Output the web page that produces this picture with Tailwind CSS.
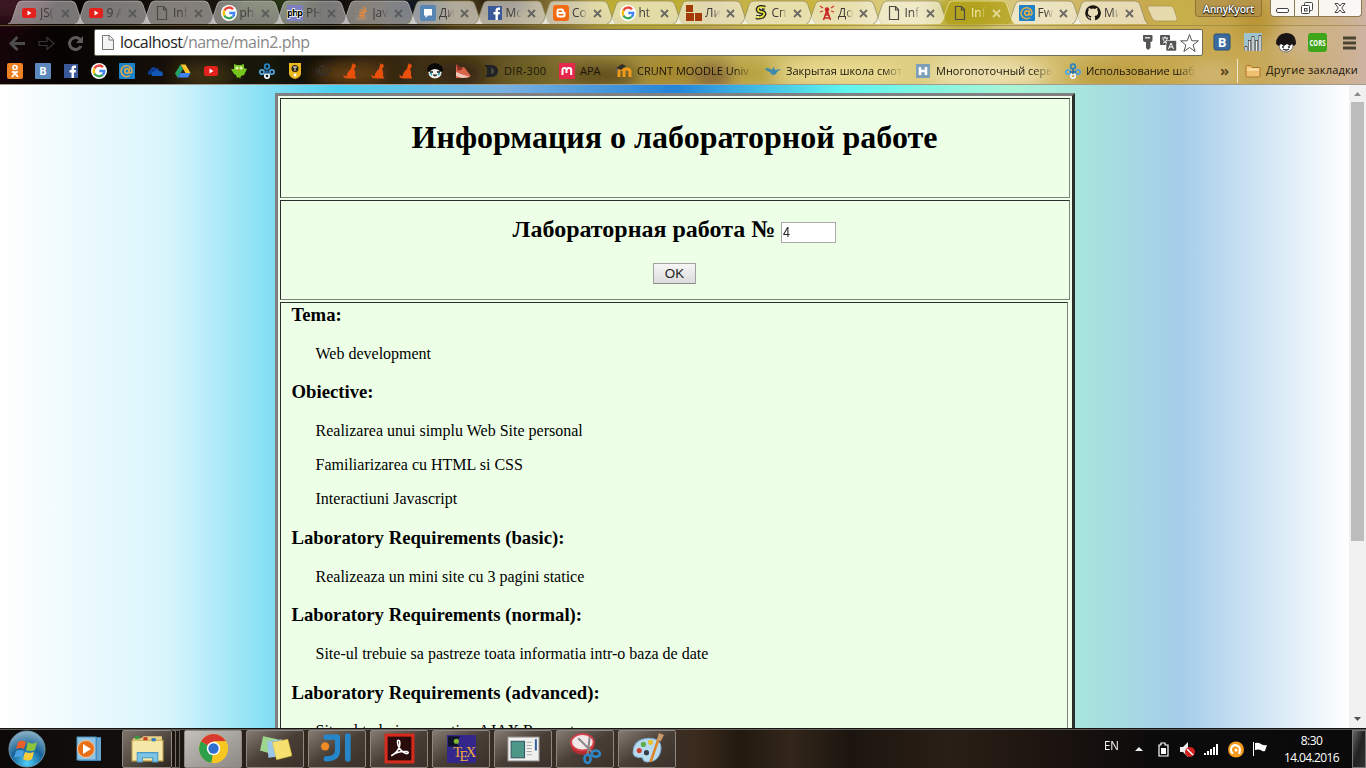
<!DOCTYPE html>
<html lang="ru">
<head>
<meta charset="utf-8">
<title>Информация о лабораторной работе</title>
<script src="https://cdn.jsdelivr.net/npm/@tailwindcss/browser@4"></script>
</head>
<body class="w-[1366px] h-[768px] overflow-hidden flex flex-col font-['Open_Sans','Noto_Sans',sans-serif] text-black">

<!-- Browser chrome -->
<header class="relative h-[85px] shrink-0 flex flex-col border-b border-[#a39a90] overflow-hidden bg-[linear-gradient(90deg,#160508_0px,#060302_60px,#0c0a05_120px,#1b120b_180px,#16170a_270px,#0a0908_330px,#2d200f_380px,#4a3a18_450px,#6b5a28_520px,#94803a_580px,#a9943f_650px,#bda850_720px,#cfbe68_790px,#dccd80_900px,#ddcf8c_980px,#d0ba68_1060px,#c7a951_1130px,#c6a74e_1240px,#caae76_1310px,#ceb3a2_1366px)]">
  <svg class="absolute inset-0" width="1366" height="85">
    <defs><filter id="soft" x="-50%" y="-50%" width="200%" height="200%"><feGaussianBlur stdDeviation="9"/></filter></defs>
    <g filter="url(#soft)">
      <ellipse cx="10" cy="0" rx="40" ry="22" fill="#3a1822"/><ellipse cx="270" cy="2" rx="40" ry="12" fill="#2c3a12"/>
      <ellipse cx="205" cy="75" rx="30" ry="10" fill="#4a3a18"/><ellipse cx="350" cy="74" rx="38" ry="12" fill="#6b4512"/>
      <ellipse cx="410" cy="10" rx="30" ry="20" fill="#111420"/><ellipse cx="500" cy="0" rx="30" ry="16" fill="#2a1d0c"/>
      <ellipse cx="460" cy="74" rx="25" ry="12" fill="#302010"/><ellipse cx="530" cy="74" rx="25" ry="12" fill="#6a6020"/>
      <ellipse cx="600" cy="76" rx="40" ry="12" fill="#5b4a1e"/><ellipse cx="670" cy="72" rx="25" ry="12" fill="#a3842a"/>
      <ellipse cx="712" cy="76" rx="22" ry="12" fill="#806030"/><ellipse cx="755" cy="74" rx="18" ry="9" fill="#b09a30"/>
      <ellipse cx="840" cy="72" rx="60" ry="12" fill="#ecdd96"/><ellipse cx="990" cy="74" rx="60" ry="12" fill="#f0e2b4"/>
      <ellipse cx="640" cy="8" rx="60" ry="20" fill="#c0b030"/><ellipse cx="800" cy="8" rx="70" ry="18" fill="#c8b43a"/>
      <ellipse cx="965" cy="12" rx="36" ry="18" fill="#aea01c"/><ellipse cx="1110" cy="76" rx="40" ry="10" fill="#b99a3c"/>
      <ellipse cx="1175" cy="14" rx="22" ry="22" fill="#c8b04a"/><ellipse cx="1255" cy="20" rx="20" ry="20" fill="#ba9534"/>
      <ellipse cx="1215" cy="74" rx="30" ry="10" fill="#d2b878"/><ellipse cx="1310" cy="40" rx="30" ry="14" fill="#cdb488"/>
    </g>
  </svg>

  <div class="relative h-[25px] shrink-0 flex">
    <div id="tabs" class="flex pl-[8px] w-[1144px]"></div>
    <svg width="34" height="25" class="shrink-0"><path d="M5 6H26q3 0 4 3l3 9q1 3-2 3H12q-3 0-4-3L4 9q-1-3 1-3z" fill="#fff" fill-opacity=".55" stroke="#a8904a" stroke-opacity=".7"/></svg>
    <div class="ml-[17px] w-[67px] h-[17px] rounded-b border border-t-0 border-[#8d7434] bg-[#b0904a]/70 text-center text-white text-[10.5px] leading-[18px] font-semibold tracking-[-0.25px] [text-shadow:0_0_2px_#000,0_1px_1px_#000]">AnnyKyort</div>
    <div class="ml-[8px] w-[92px] h-[17px] flex rounded-b border border-t-0 border-[#8d7a50] bg-white/90">
      <svg width="24" height="16" class="border-r border-[#8d7a50]"><rect x="5.500" y="8.500" width="12" height="4" rx="1.500" fill="#fff" stroke="#444"/></svg>
      <svg width="25" height="16" class="border-r border-[#8d7a50]"><g fill="#fff" stroke="#444"><rect x="9.500" y="2.500" width="8" height="8" rx="1"/><rect x="6.500" y="5.500" width="8" height="8" rx="1"/><rect x="9.500" y="8.500" width="2.500" height="2.500"/></g></svg>
      <svg width="42" height="16"><path d="M16 3.500h3l2 2.500 2-2.500h3l-3.300 4.500 3.300 4.500h-3l-2-2.500-2 2.500h-3l3.300-4.500z" fill="#fff" stroke="#444"/></svg>
    </div>
  </div>

  <div class="relative h-[33px] shrink-0 flex items-center border-t border-[#8d8040]/60">
    <svg width="94" height="33" class="shrink-0" fill="none">
      <path d="M25 17.500H12M17.500 11l-6.500 6.500 6.500 6.500" stroke="#4c4c4c" stroke-width="3"/>
      <path d="M39 15.500h8v-4l7 6-7 6v-4h-8z" stroke="#363636" stroke-width="1.200"/>
      <path d="M80 13.500A6 6 0 1 0 81 20" stroke="#5c5c5c" stroke-width="3"/><path d="M83 10v7h-7z" fill="#5c5c5c"/>
    </svg>
    <div class="w-[1109px] h-[27px] shrink-0 bg-white rounded-[2px] border border-[#6f6a5a] flex items-center">
      <svg width="25" height="25" class="shrink-0" fill="#f4f4f4" stroke="#777"><path d="M7.500 5.500h7l4 4v10h-11zM14 5.500v4.500h4.500"/></svg>
      <div class="text-[16px] leading-[24px] text-[#888] w-[1020px] whitespace-nowrap tracking-[-0.5px]"><span class="text-[#222]">localhost</span>/name/main2.php</div>
      <svg width="62" height="25" class="shrink-0">
        <path d="M3.500 5h8q1 0 1 1v4q0 2-2 2v6L8 20l-2-2v-6q-3 0-3-2V6q0-1 .5-1z" fill="#555"/><rect x="5" y="7" width="5" height="1.500" fill="#ddd"/>
        <rect x="20" y="5" width="10" height="10" rx="1" fill="#555"/><rect x="26" y="10.500" width="10.500" height="10.500" rx="1" fill="#555" stroke="#fff" stroke-width=".6"/>
        <path d="M22 8h6M25 6.500V8M23 13c3-1 4-3 4-5M23 9c1 2 2 3 4 4" stroke="#fff" fill="none"/><path d="M28.500 19l2.500-6 2.500 6M29.500 17h3" stroke="#fff" fill="none"/>
        <path d="M49.500 4.500l2.300 6.300h6.600l-5.300 4.200 2 6.500-5.600-4-5.600 4 2-6.500-5.300-4.200h6.600z" fill="#fff" stroke="#555"/>
      </svg>
    </div>
    <svg width="163" height="33" class="shrink-0">
      <rect x="11" y="8" width="16" height="16" rx="2" fill="#3a6a9e" stroke="#24507c"/><text x="19" y="21" text-anchor="middle" font-size="13" font-weight="700" fill="#fff" font-family="Open Sans">B</text>
      <rect x="41" y="7" width="18" height="18" fill="#9fc2cf"/><path d="M43 25v-5M46.500 25V14M50 25V10M53.500 25V14M57 25V9" stroke="#555" stroke-width="3"/><path d="M43 25v-4M46.500 25V15M50 25V11M53.500 25V15M57 25V10" stroke="#eee" stroke-width="1.500"/>
      <ellipse cx="83" cy="20" rx="7" ry="6" fill="#fff" stroke="#777"/><path d="M73 18q0-10 10-11 10 0 10 11l-2 2-2-2-2 2-3-2-3 2-3-2-2 2z" fill="#1b1414"/><path d="M79 21h2M85 21h2M80 23q3 2 6 0" stroke="#222" stroke-width="1.300" fill="none"/>
      <rect x="105" y="7" width="19" height="19" rx="3" fill="#3fa51a"/><text x="114.500" y="20" text-anchor="middle" font-size="9" font-weight="700" fill="#fff" font-family="Open Sans" textLength="16" lengthAdjust="spacingAndGlyphs">CORS</text>
      <path d="M140 12h13M140 17h13M140 22h13" stroke="#4c4433" stroke-width="3"/>
    </svg>
  </div>
  <div id="marks" class="relative h-[25px] flex items-center pl-[1px] text-[11px] text-[#1c1508]"></div>
</header>

<!-- Web page -->
<main class="h-[643px] shrink-0 flex overflow-hidden">
  <div class="w-[1349px] h-full pt-[8px] flex justify-center items-start bg-[linear-gradient(90deg,#fff,#d8f5fc,#4bd0ef,#78b0e0,#2484d8,#5ef5ee,#aaf5d5,#a5cde9,#fff)]">
    <div class="w-[800px] flex flex-col gap-[2px] border-[3px] border-t-[#808080] border-l-[#808080] border-r-[#2b2f2b] border-b-[#2b2f2b] p-[2px] bg-[#eeffe8] font-['Liberation_Serif',serif]">
      <section class="h-[100px] border border-t-[#2b2f2b] border-l-[#2b2f2b] border-r-[#808080] border-b-[#808080] pt-[20px] text-center">
        <h1 class="text-[32px] leading-[37px] font-bold">Информация о лабораторной работе</h1>
      </section>
      <section class="h-[100px] border border-t-[#2b2f2b] border-l-[#2b2f2b] border-r-[#808080] border-b-[#808080] pt-[14px] flex flex-col items-center">
        <div class="flex"><h2 class="text-[24px] leading-[28px] font-bold whitespace-nowrap">Лабораторная работа №</h2>
          <div class="ml-[6px] mt-[7px] w-[55px] h-[21px] bg-white border border-[#a9a9a9] pl-[1px] text-[14px] leading-[19px] font-['Liberation_Sans',sans-serif] text-[#222]"><span class="inline-block origin-left scale-x-90">4</span></div></div>
        <button class="mt-[20px] w-[43px] h-[21px] rounded-[1px] border border-[#a0a0a0] border-b-[#8a8a8a] bg-linear-to-b from-[#f6f6f6] to-[#dcdcdc] text-[13.33px] leading-[19px] font-['Liberation_Sans',sans-serif] text-[#222]">OK</button>
      </section>
      <section class="w-[788px] h-[600px] border border-t-[#2b2f2b] border-l-[#2b2f2b] border-r-[#808080] border-b-[#808080] pl-[11px] pt-[1px] text-[16px] leading-[18px] [&_h3]:text-[18.72px] [&_h3]:leading-[22px] [&_h3]:font-bold [&_h3]:mb-[18.72px] [&_p]:pl-[24px] [&_p]:mb-[16px] [&_p+h3]:mt-[18.72px] [&_p:has(+h3)]:mb-0">
        <h3>Tema:</h3><p>Web development</p>
        <h3>Obiective:</h3><p>Realizarea unui simplu Web Site personal</p><p>Familiarizarea cu HTML si CSS</p><p>Interactiuni Javascript</p>
        <h3>Laboratory Requirements (basic):</h3><p>Realizeaza un mini site cu 3 pagini statice</p>
        <h3>Laboratory Requirements (normal):</h3><p>Site-ul trebuie sa pastreze toata informatia intr-o baza de date</p>
        <h3>Laboratory Requirements (advanced):</h3><p>Site-ul trebuie sa contina AJAX Requests</p>
      </section>
    </div>
  </div>
  <div class="w-[17px] h-full bg-[#f1f1f1] flex flex-col items-center">
    <svg width="17" height="17"><path d="M5 11h7l-3.500-4z" fill="#8b8b8b"/></svg>
    <div class="w-[13px] h-[439px] bg-[#bcbcbc]"></div>
    <svg width="17" height="17" class="mt-auto"><path d="M5 6h7l-3.500 4z" fill="#505050"/></svg>
  </div>
</main>

<!-- Taskbar -->
<footer class="h-[40px] shrink-0 flex border-t border-[#181410] bg-[linear-gradient(90deg,#0c0a09,#120e0b_120px,#33271e_300px,#3c3028_660px,#3a2a1c_700px,#22190f_740px,#33261a_790px,#1c150f_850px,#2a1f16_950px,#1e1510_1040px,#0c0b0b_1150px,#0a0a0a)]">
  <div id="task" class="flex w-[1098px] border-t border-[#777]/70"></div>
  <div class="flex-1 flex items-center border-t border-[#777]/70 text-white">
    <span class="w-[37px] pl-[6px] text-[12px] leading-[16px] -mt-[6px]"><span class="inline-block origin-left scale-x-95">EN</span></span>
    <svg width="140" height="38" class="shrink-0">
      <path d="M0 21h8l-4-4z" fill="#eee"/>
      <path d="M26 13h4v2h3v11h-9V15h2z" fill="none" stroke="#fff" stroke-width="1.200"/><rect x="26" y="18" width="5" height="6" fill="#fff"/>
      <path d="M45 17h3l5-5v15l-5-5h-3z" fill="#eee"/><circle cx="55" cy="22" r="5" fill="#d02020"/><path d="M52 19l6 6" stroke="#fff" stroke-width="1.500"/>
      <path d="M70 25v-2M73 25v-4M76 25v-6M79 25v-8M82 25V14" stroke="#fff" stroke-width="2"/>
      <circle cx="101" cy="19.500" r="8" fill="#f39a1b"/><path d="M98 23.500a4.500 4.500 0 1 1 6.500-2v2.500" fill="none" stroke="#fff" stroke-width="2.200"/><circle cx="101" cy="20" r="1.500" fill="#fff"/>
      <path d="M118.500 12v14" stroke="#fff"/><path d="M120 13q3-1 6 1 3 2 6 1l-2 6q-3 1-4-1-3-1-6 0z" fill="#fff"/>
    </svg>
    <div class="w-[77px] text-center text-[12px] leading-[17px] -ml-[2px] tracking-[-0.6px]"><div>8:30</div><div>14.04.2016</div></div>
    <div class="ml-auto w-[14px] h-[38px] border border-[#777] bg-linear-to-br from-[#666] via-[#222] to-[#333]"></div>
  </div>
</footer>

<script>
// 16x16 glyphs shared by the tabs and the bookmarks bar
const T = (t, s, f, y = 13) => `<text x="8" y="${y}" text-anchor="middle" font-family="Open Sans" font-weight="700" font-size="${s}" fill="${f}">${t}</text>`;
const cat = '<path d="M9.500 0l1.200 1.800L12 .5l.8 3-1.800 2.500Q13 9 12 13l1.500 2.500H5.500L2 15Q0 14 .5 11q1 2.500 3 2.500Q4 9 8 6l.5-2z" fill="#e8500c"/>';
const ring = '<g fill="none" stroke-width="1.800"><circle cx="8" cy="3.500" r="2.300" stroke="#2b85c2"/><circle cx="3" cy="9" r="2.200" stroke="#55a9dd"/><circle cx="13" cy="9" r="2.200" stroke="#4ba0dc"/><circle cx="8" cy="13" r="2.200" stroke="#e8f4fa"/></g><path d="M8 6v5M5 9h6" stroke="#2368a0" stroke-width="1.500"/>';
const I = {
  yt: '<rect x="1" y="3" width="14" height="10" rx="2.500" fill="#e3201b"/><path d="M6.500 5.500v5l4-2.500z" fill="#fff"/>',
  doc: '<path d="M3.500 1.500h6l3 3v10h-9zM9.500 1.500v3.500h3" fill="none" stroke="#4d4a45" stroke-width="1.200"/>',
  g: '<circle cx="8" cy="8" r="8" fill="#fff"/><g fill="none" stroke-width="2.300"><path d="M12 4.200A5.300 5.300 0 0 0 3.400 5.400" stroke="#ea4335"/><path d="M3.400 5.400a5.300 5.300 0 0 0 0 5.200" stroke="#fbbc05"/><path d="M3.400 10.600a5.300 5.300 0 0 0 8.200 1.300" stroke="#34a853"/><path d="M11.600 11.900A5.300 5.300 0 0 0 13.300 8H8.300" stroke="#4285f4"/></g>',
  php: '<rect width="16" height="16" fill="#7c7fc0"/><text x="8" y="11" text-anchor="middle" font-size="9.500" font-weight="700" textLength="16" stroke="#fff" stroke-width="1.500" paint-order="stroke" font-family="Open Sans">php</text>',
  so: '<path d="M3 10v4.500h9V10" fill="none" stroke="#a08c7c" stroke-width="1.300"/><path d="M5 12.500h5.500M5 10l5.500.8M5.500 7l5 2M7 4l4.200 4M10 1.500l2 5.500" stroke="#ea8a3c" stroke-width="1.500"/>',
  chat: '<rect width="16" height="16" rx="2" fill="#5785b4"/><path d="M4 4h8v6.500H8L5.500 13v-2.500H4z" fill="#fff"/>',
  fb: '<rect x="1" y="1" width="14" height="14" fill="#3b5998"/><path d="M8.500 15V9.500H6.500V7h2V5.500q0-3 3-3H13V5h-1.300q-.8 0-.8.900V7H13l-.4 2.500h-1.700V15z" fill="#fff"/>',
  bl: '<rect width="16" height="16" rx="3" fill="#f26a13"/><path d="M5.500 3.500h3q2.500 0 2.500 2.500 0 1 1.500 1v3q0 2.500-2.500 2.500H6q-2.500 0-2.500-2.500V6q0-2.500 2-2.500z" fill="#fff"/><path d="M6 6.300h2.500M6 9.700h4" stroke="#f26a13" stroke-width="1.400" stroke-linecap="round"/>',
  sq: '<path d="M0 0h7v7H0zM0 8h8v8H0zM9 8h7v8H9z" fill="#a33a08"/>',
  s: '<path d="M12 3q-6-2-7 1-.5 2.500 4 3 4 1 1 4-2 2-7 1" fill="none" stroke="#222" stroke-width="4.500"/><path d="M12 3q-6-2-7 1-.5 2.500 4 3 4 1 1 4-2 2-7 1" fill="none" stroke="#e8e43c" stroke-width="1.800"/><path d="M7 3l2 1M4 12l2-1" stroke="#fff"/>',
  ant: '<path d="M8 5L4.500 15M8 5l3.500 10M6 10h4M5 13h6M6.500 8h3" stroke="#c82424" stroke-width="1.500"/><path d="M4 3L1 1M12 3l3-2M4 6L1 7M12 6l3 1" stroke="#d23333" stroke-width="1.300"/><circle cx="8" cy="4.500" r="2.200" fill="#c82424"/>',
  mail: '<rect width="16" height="16" rx="1" fill="#1c83c8"/><circle cx="8" cy="8" r="2.300" fill="none" stroke="#e9ae45" stroke-width="1.500"/><path d="M10.300 5.500v3.500q1.300 2 2.700 0a5.500 5.500 0 1 0-2 3.500" fill="none" stroke="#dfac50" stroke-width="1.500"/>',
  gh: '<path d="M8 .3a7.700 7.700 0 0 0-2.500 15c.4.1.5-.2.500-.4v-1.500c-2.200.500-2.700-1-2.700-1-.3-.9-.9-1.100-.9-1.100-.7-.5.100-.5.100-.5.800.1 1.200.8 1.200.8.700 1.200 1.900.9 2.300.7.100-.5.300-.9.500-1.100-1.800-.2-3.600-.9-3.600-3.900 0-.8.300-1.500.8-2.100-.1-.2-.4-1 .1-2.100 0 0 .7-.2 2.200.8a7.500 7.500 0 0 1 4 0c1.500-1 2.200-.8 2.200-.8.400 1.100.1 1.900.1 2.100.5.600.8 1.300.8 2.100 0 3-1.800 3.700-3.600 3.900.3.300.6.700.6 1.500v2.200c0 .2.100.5.500.4A7.700 7.700 0 0 0 8 .3" fill="#181410"/>',
  ok: '<rect width="16" height="16" rx="2" fill="#ee8222"/><circle cx="8" cy="4.500" r="2" fill="none" stroke="#fff" stroke-width="1.600"/><path d="M5 8.500q3 2 6 0M5 14l3-3.500 3 3.500" fill="none" stroke="#fff" stroke-width="1.800"/>',
  vk: '<rect width="16" height="16" rx="1" fill="#5b88bd"/>' + T('B', 11, '#fff', 12),
  od: '<path d="M2 12q-3-3 1-5 2-5 6-2 3 0 3 3" fill="#0c3d91"/><path d="M5 13q-2-4 2-4 2-4 5-1 4 0 4 3 0 2-2 2z" fill="#1459b8"/>',
  dr: '<path d="M5.500 1.500h5l5 8.500h-5z" fill="#fbc32c"/><path d="M5.500 1.500L0 10.500l2.500 4L8 6z" fill="#25a366"/><path d="M5.500 10h10L13 14.500H2.500z" fill="#3f83ef"/>',
  owl: '<path d="M3 1l3 1h4l3-1v4l3 1-3 6-3 1-1 3-1-2-2 1-1-3-2-1-3-5 3 0z" fill="#76c51c"/><circle cx="6" cy="5" r="1.600" fill="#e4f8b8"/><circle cx="10" cy="5" r="1.600" fill="#e4f8b8"/><path d="M7 6.500h2l-1 2z" fill="#e28a10"/>',
  ring,
  badge: '<path d="M2 0h12v11q-1 4-6 5-5-1-6-5z" fill="#ecb81f"/><circle cx="8" cy="5.500" r="3.500" fill="#2a2413"/><path d="M6 4h4M8 4v4" stroke="#eee" fill="none"/><circle cx="8" cy="12" r="1.500" fill="#fff"/>',
  eye: '<path d="M1 6q2 6 7 6 6 0 7-6" fill="none" stroke="#35312a" stroke-width="1.500"/><circle cx="8" cy="7" r="4" fill="none" stroke="#3a362e" stroke-width="1.300"/><circle cx="8" cy="7" r="1.500" fill="#3a362e"/>',
  cat,
  face: '<ellipse cx="8" cy="9.500" rx="6.500" ry="6" fill="#f5f5f0"/><path d="M0 8Q0 1 8 0q8 1 8 8l-2 1q-3-3-6-3T2 9z" fill="#080808"/><path d="M3 9h3M10 9h3" stroke="#111" stroke-width="1.300"/><path d="M2 10h3v3zM14 10h-3v3z" fill="#3bb5cf"/><path d="M5.500 11.500h5q-2.500 4-5 0z" fill="#222"/>',
  fox: '<path d="M1 1l4 4 4-1 7 9-4 2H1z" fill="#d8634a"/><path d="M1 9l5 2 9 3-8 1-6-2z" fill="#f0c8b8"/><path d="M1 1l2 7 5-2z" fill="#8a3126"/>',
  D: '<path d="M1 2h8q6 1 6 6t-6 6H2l2-3V5z" fill="#202326"/><path d="M8 5v6q3 0 3-3T8 5" fill="#4b4942"/>',
  m: '<rect width="16" height="16" fill="#e6284a"/><path d="M3.500 12V7q0-2 2-2t2 2v3M7.800 7q0-2 2.200-2t2.200 2v5" fill="none" stroke="#fff" stroke-width="2"/>',
  moo: '<path d="M3 14V8q0-2 2.500-2T8 8v6M8 8q0-2 3-2t3 2v6" fill="none" stroke="#f19a1a" stroke-width="3"/><path d="M0 5l6-4 4 2-5 4z" fill="#33302c"/><path d="M1 5v5" stroke="#666"/>',
  bird: '<path d="M0 5q5 0 7 2 1-3 2-3l1 3 6-1-4 3q-1 3-4 3-3-1-3-3-4-1-5-4z" fill="#3b8aaa"/>',
  H: '<rect x="1" y="1" width="14" height="14" fill="#7d9fb8"/><path d="M5 4v8M11 4v8M5 8h6" stroke="#fff" stroke-width="2.500"/>',
  fold: '<path d="M1 3.500q0-1 1-1h4l1.500 2H14q1 0 1 1V13q0 1-1 1H2q-1 0-1-1z" fill="#efc070" stroke="#a9762b"/><path d="M2 6.500h12" stroke="#fbe3b0" stroke-width="2"/>'
};
const svg = (k, s = 16) => `<svg width="${s}" height="${s}" viewBox="0 0 16 16" class="shrink-0">${I[k]}</svg>`;

const tabs = [['yt','JS('],['yt','9 А'],['doc','Inf'],['g','ph'],['php','PH'],['so','jav'],['chat','Ди'],['fb','Mо'],['bl','Co'],['g','ht'],['sq','Ли'],['s','Сп'],['ant','До'],['doc','Inf'],['doc','Inf'],['mail','Fw'],['gh','Mи']];
document.getElementById('tabs').innerHTML = tabs.map(([k, t], i) => {
  const on = i === 14;
  return `<div class="relative w-[66.5px] shrink-0 flex items-center pl-[13px] ${on ? 'z-10' : ''}">
    <svg class="absolute left-0 top-0" width="76" height="25"><path d="M0 24Q3 23 4 20L9 5q1-4 5-4H63q4 0 5 4l5 15q1 3 3 4" fill="${on ? '#b3a21c' : '#fff'}" fill-opacity="${on ? .75 : i < 6 ? .46 : .57}" stroke="${on ? '#f0e8a8' : i < 6 ? '#bbb' : '#8f875c'}" stroke-opacity=".7"/></svg>
    <span class="relative flex items-center pt-[1px]">${svg(k)}<span class="ml-[3px] w-[17px] mr-[-2px] overflow-hidden whitespace-nowrap text-[12px] leading-[18px] ${on ? 'text-[#f5eeb0]' : 'text-[#3d3a38]'} [mask-image:linear-gradient(90deg,#000_45%,transparent_90%)]">${t}</span>
    <svg width="9" height="9" class="ml-[6px]"><path d="M1 1l7 7M8 1L1 8" stroke="${on ? '#e9e2a4' : '#555'}" stroke-opacity=".85" stroke-width="1.800"/></svg></span></div>`;
}).join('');

const small = ['ok','vk','fb','g','mail','od','dr','yt','owl','ring','badge','eye','cat','cat','cat','face','fox'];
const named = [['D','DIR-300',76],['m','APA',57],['moo','CRUNT MOODLE Univ',149],['bird','Закрытая школа смот',150],['H','Многопоточный серв',150],['ring','Использование шабл',137]];
document.getElementById('marks').innerHTML =
  small.map(k => `<span class="w-[28px] shrink-0 flex justify-center">${svg(k)}</span>`).join('') +
  named.map(([k, t, w], i) => `<span class="shrink-0 flex items-center pl-[6px] gap-[5px]" style="width:${w}px">${svg(k)}<span class="whitespace-nowrap leading-[18px] ${i === 0 ? 'tracking-[0.3px]' : i === 5 ? 'tracking-[-0.05px]' : ''} ${i > 1 ? 'w-[117px] overflow-hidden [mask-image:linear-gradient(90deg,#000_83%,transparent)]' : ''}">${t}</span></span>`).join('') +
  `<span class="w-[41px] shrink-0 pl-[24px] text-[15px] leading-[16px] pb-[2px] font-bold text-[#5a4820]">»</span><span class="w-px h-[24px] bg-white/70 shrink-0"></span><span class="flex items-center pl-[7px] gap-[5px]">${svg('fold')}<span class="whitespace-nowrap tracking-[0.2px]">Другие закладки</span></span>`;

const P = {
  wmp: '<rect x="6" y="4" width="22" height="24" fill="#3d84ba"/><path d="M25 5v22M27 5v22" stroke="#8fc6e4"/><rect x="4" y="4" width="19" height="23" fill="#8fc6e4" stroke="#4b90bd"/><circle cx="13" cy="16" r="8.500" fill="#e86f18" stroke="#f6c498"/><path d="M10 11v10l8-5z" fill="#fff"/>',
  exp: '<path d="M2 6h8l2-2h18v24H2z" fill="#e9d287"/><path d="M1 8h30v20H1z" fill="#f6e9a8" stroke="#c9a950"/><path d="M4 4h4v3H4z" fill="#30a040"/><path d="M12 5h4v3h-4z" fill="#c84020"/><path d="M20 6h4v3h-4z" fill="#3078c0"/><path d="M6 29v-9h20v9h-5v-4H11v4z" fill="#7cc3e4" stroke="#4a98c4"/>',
  chr: '<circle cx="16" cy="16" r="14" fill="#f5c720"/><path d="M16 16L3.900 9A14 14 0 0 0 14 29.900z" fill="#2fa04a"/><path d="M3.900 9A14 14 0 0 1 28.100 9H16v7z" fill="#d83a30"/><path d="M28.100 9H16v7l6 3.500L15 30A14 14 0 0 0 28.100 9z" fill="#f5c720"/><circle cx="16" cy="16" r="6.500" fill="#fff"/><circle cx="16" cy="16" r="5" fill="#2f6fd0"/>',
  note: '<path d="M4 4l14 3-3 15L1 18z" fill="#9ed68e"/><path d="M8 9l14-2 2 16-15 2z" fill="#9ac6e8"/><path d="M13 10l15-3 4 16-15 4z" fill="#f5e070" stroke="#d2b93c" stroke-width=".5"/>',
  ji: '<circle cx="4" cy="14" r="4" fill="#f08a24"/><path d="M5 5h11v13q0 8-11 8" fill="none" stroke="#2587ca" stroke-width="5" stroke-linejoin="round" stroke-linecap="round"/><path d="M26 4v22" stroke="#2587ca" stroke-width="5.500" stroke-linecap="round"/>',
  pdf: '<rect x="3" y="3" width="26" height="26" fill="#290b0b" stroke="#d52a1c" stroke-width="3"/><path d="M8 23q6-3 8-9 1-6-1-6t0 6q3 6 8 7 3-1 0-2-8-1-15 4z" fill="none" stroke="#fff" stroke-width="1.500"/>',
  tex: '<rect x="2" y="3" width="28" height="27" fill="#33278c"/><path d="M3 4h12l-5 6 4 4H3z" fill="#101428"/><circle cx="11" cy="9" r="2.500" fill="#80b830"/><g font-family="Liberation Serif" font-size="14" fill="#f0ac38"><text x="8" y="24">T</text><text x="14" y="28">E</text><text x="20" y="24">X</text></g>',
  win: '<rect x="1" y="5" width="30" height="23" fill="#f0f0ee" stroke="#aaa"/><rect x="4" y="9" width="13" height="16" fill="#4d9788" stroke="#356"/><path d="M19 10h5M19 13h5M19 16h5M19 19h5M19 22h5" stroke="#aaa"/><path d="M28 7v11" stroke="#37609a" stroke-width="2"/>',
  cut: '<ellipse cx="13" cy="14" rx="11" ry="8" fill="#b52a2e"/><ellipse cx="13" cy="10" rx="11" ry="8" fill="#f3e8e8" stroke="#d24048" stroke-width="2"/><path d="M9 6l14 14M20 5l-2 18" stroke="#888" stroke-width="2"/><ellipse cx="26" cy="21" rx="4" ry="3" fill="none" stroke="#2f86c8" stroke-width="2.500"/><ellipse cx="18" cy="26" rx="3" ry="4" fill="none" stroke="#2f86c8" stroke-width="2.500"/>',
  art: '<path d="M2 20Q2 7 17 6q13 0 12 11-2 12-13 12-4 0-5-4-9 0-9-5z" fill="#b9dbf0" stroke="#7caacb"/><circle cx="8" cy="18" r="2.500" fill="#d04030"/><circle cx="12" cy="12" r="2.500" fill="#60ac48"/><circle cx="19" cy="10" r="2.500" fill="#e6c030"/><circle cx="15" cy="20" r="2.500" fill="#383c48"/><path d="M27 6l-8 23" stroke="#df8424" stroke-width="2.500"/><path d="M25 8l2-7 5 2-3 6z" fill="#c89868"/>'
};
const big = k => `<svg width="33" height="33" viewBox="0 0 32 32" class="mb-[2px]">${P[k]}</svg>`;
const cell = 'h-[38px] rounded-[2px] border border-[#8e8780] flex items-center justify-center shrink-0';
document.getElementById('task').innerHTML =
  `<svg width="64" height="38" class="shrink-0"><defs><radialGradient id="orb" cx=".5" cy=".9" r=".9"><stop offset="0" stop-color="#4fd0f8"/><stop offset=".5" stop-color="#17639a"/><stop offset="1" stop-color="#8fb4c8"/></radialGradient></defs><circle cx="27" cy="19" r="18" fill="url(#orb)" stroke="#6f95a8"/><path d="M18 12q4-3 8 0l-2 7q-3-2-8 0z" fill="#e7602a"/><path d="M28 12q4 3 9 0l-2 8q-4 2-9 0z" fill="#8cc43c"/><path d="M16 21q4-2 8 0l-2 7q-4-3-8 0z" fill="#4aa0e0"/><path d="M25 22q4 2 9 0l-2 7q-4 3-9 0z" fill="#f8cc38"/></svg>
   <span class="w-[58px] shrink-0 flex items-center justify-center pr-[8px]"><svg width="32" height="32" viewBox="0 0 32 32">${P.wmp}</svg></span>
   <span class="w-[50px] ${cell} bg-linear-to-br from-[#7d736a] to-[#2e2620]">${big('exp')}</span><span class="w-[4px] h-[38px] border border-l-0 border-[#77706a]"></span><span class="w-[4px] h-[38px] mr-[4px] border border-l-0 border-[#66605a]"></span>
   <span class="w-[58px] ${cell} bg-linear-to-br from-[#c4c0bc] to-[#8c8884] mr-[4px]">${big('chr')}</span>` +
  ['note','ji','pdf','tex','win','cut','art'].map(k => `<span class="w-[58px] ${cell} mr-[4px] bg-linear-to-br from-[#857b72] via-[#493e36] to-[#3b312a]">${big(k)}</span>`).join('');
</script>
</body>
</html>
